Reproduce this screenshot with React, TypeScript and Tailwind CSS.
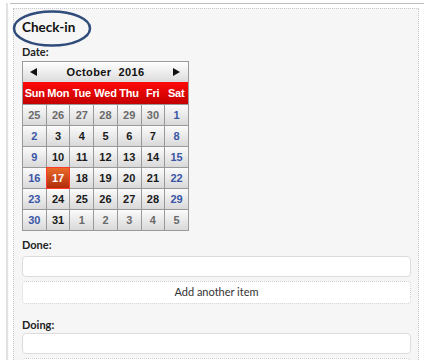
import React from "react";

type Day = { n: number; cur: boolean; wk: boolean; today?: boolean };

const rows: number[][] = [
  [25, 26, 27, 28, 29, 30, 1],
  [2, 3, 4, 5, 6, 7, 8],
  [9, 10, 11, 12, 13, 14, 15],
  [16, 17, 18, 19, 20, 21, 22],
  [23, 24, 25, 26, 27, 28, 29],
  [30, 31, 1, 2, 3, 4, 5],
];

function cells(): Day[] {
  const out: Day[] = [];
  rows.forEach((r, ri) => {
    r.forEach((n, ci) => {
      const cur = !((ri === 0 && n > 20) || (ri === 5 && n < 10));
      out.push({ n, cur, wk: ci === 0 || ci === 6, today: cur && n === 17 });
    });
  });
  return out;
}

function Calendar() {
  const names = ["Sun", "Mon", "Tue", "Wed", "Thu", "Fri", "Sat"];
  return (
    <div
      className="w-[167px] border border-[#999] bg-[#999]"
      style={{ fontFamily: '"Liberation Sans", Arial, sans-serif' }}
    >
      <div className="h-[20px] flex items-center justify-between px-[7px] bg-gradient-to-b from-[#ffffff] to-[#dcdcdc] text-[#111]">
        <svg width="8" height="8" viewBox="0 0 8 8">
          <polygon points="7,0 7,8 0,4" fill="#111" />
        </svg>
        <span className="text-[11px] font-bold tracking-[0.4px] whitespace-pre">October  2016</span>
        <svg width="8" height="8" viewBox="0 0 8 8">
          <polygon points="0,0 0,8 7,4" fill="#111" />
        </svg>
      </div>
      <div className="h-[22px] grid grid-cols-7 items-center bg-gradient-to-b from-[#ff0a0a] to-[#c40000]">
        {names.map((d) => (
          <div key={d} className="text-center text-white text-[11px] font-bold tracking-[-0.2px]">
            {d}
          </div>
        ))}
      </div>
      <div className="grid grid-cols-7 gap-px pt-px">
        {cells().map((c, i) => {
          const base = "h-[20px] flex items-center justify-center text-[11px] font-bold";
          if (c.today)
            return (
              <div
                key={i}
                className={`${base} text-white bg-gradient-to-b from-[#ea6a2a] to-[#b02a08] outline outline-1 outline-[#ff3a2a] relative`}
              >
                {c.n}
              </div>
            );
          const color = !c.cur ? "text-[#6a6a6a]" : c.wk ? "text-[#3a56a6]" : "text-[#1a1a1a]";
          return (
            <div
              key={i}
              className={`${base} ${color} bg-gradient-to-b from-[#fbfbfb] to-[#d9d9d9]`}
            >
              {c.n}
            </div>
          );
        })}
      </div>
    </div>
  );
}

export default function App() {
  return (
    <div
      className="w-[429px] h-[360px] overflow-hidden bg-white flex"
      style={{ fontFamily: 'Lato, "Open Sans", sans-serif' }}
    >
      <div className="w-[6px] shrink-0" />
      <div className="flex-1 border-l-2 border-[#e2e2e2] mt-[3px]">
        <div className="h-px bg-[#bdbdbd] ml-[2px] mr-[5px]" />
        <div className="relative ml-[5px] mt-[4px] w-[406px] h-[400px] border border-dotted border-[#c8c8c8] bg-[#f6f6f6] pl-[8px] pr-[7px]">
          <svg
            className="absolute left-[-3px] top-[1px]"
            width="82"
            height="38"
            viewBox="0 0 82 38"
          >
            <ellipse cx="41" cy="18.5" rx="38" ry="17" fill="none" stroke="#2f4c7a" strokeWidth="2.5" />
          </svg>
          <div className="mt-[8px] h-[20px] leading-[20px] text-[13.5px] font-bold text-[#111]">Check-in</div>
          <div className="mt-[8px] h-[14px] leading-[14px] text-[11px] font-bold text-[#222]">Date:</div>
          <div className="mt-[2px]">
            <Calendar />
          </div>
          <div className="mt-[7px] h-[14px] leading-[14px] text-[11px] font-bold text-[#222]">Done:</div>
          <div className="mt-[4px] h-[21px] bg-white border border-[#dcdcdc] rounded-[4px]" />
          <div className="mt-[4px] h-[23px] bg-white border border-dotted border-[#cfcfcf] rounded-[4px] flex items-center justify-center text-[11px] text-[#333]">
            Add another item
          </div>
          <div className="mt-[14px] h-[14px] leading-[14px] text-[11px] font-bold text-[#222]">Doing:</div>
          <div className="mt-[1px] h-[21px] bg-white border border-[#dcdcdc] rounded-[4px]" />
          <div className="mt-[4px] h-[23px] bg-white border border-dotted border-[#cfcfcf] rounded-[4px]" />
        </div>
      </div>
    </div>
  );
}
